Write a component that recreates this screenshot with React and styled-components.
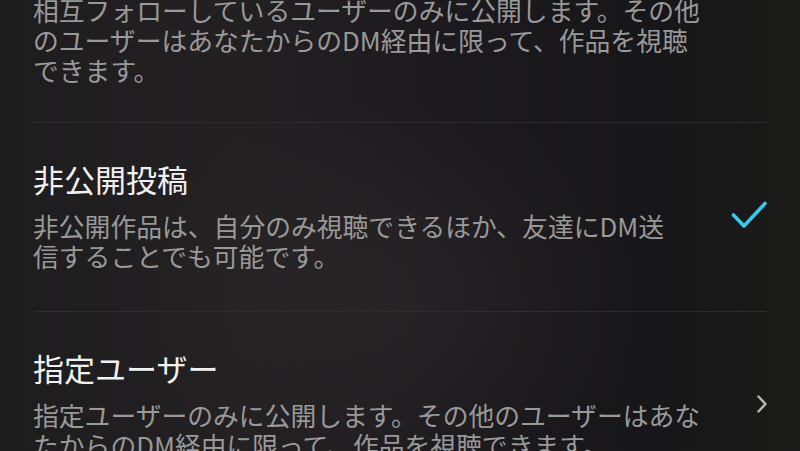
import styled, { createGlobalStyle } from 'styled-components'

const GlobalStyle = createGlobalStyle`
  html, body {
    margin: 0;
    padding: 0;
    background: #1c1a1d;
  }
  body {
    font-family: 'Noto Sans CJK JP', 'Noto Sans', sans-serif;
  }
`

const options = [
  {
    id: 'mutual',
    lines: [
      '相互フォローしているユーザーのみに公開します。その他',
      'のユーザーはあなたからのDM経由に限って、作品を視聴',
      'できます。',
    ],
  },
  {
    id: 'private',
    title: '非公開投稿',
    lines: [
      '非公開作品は、自分のみ視聴できるほか、友達にDM送',
      '信することでも可能です。',
    ],
    trail: 'check',
  },
  {
    id: 'users',
    title: '指定ユーザー',
    lines: [
      '指定ユーザーのみに公開します。その他のユーザーはあな',
      'たからのDM経由に限って、作品を視聴できます。',
    ],
    trail: 'chevron',
  },
]

const CheckIcon = () => (
  <svg width='36' height='28' viewBox='0 0 36 28' fill='none'>
    <path
      d='M2.5 14 L13 25 L34 2.5'
      stroke='#3cc7ea'
      strokeWidth='3.6'
      strokeLinecap='round'
      strokeLinejoin='round'
    />
  </svg>
)

const ChevronIcon = () => (
  <svg width='10' height='18' viewBox='0 0 10 18' fill='none'>
    <path
      d='M1.5 1.5 L8.5 9 L1.5 16.5'
      stroke='#b9b9b9'
      strokeWidth='2.4'
      strokeLinecap='round'
      strokeLinejoin='round'
    />
  </svg>
)

const App = () => {
  return (
    <>
      <GlobalStyle />
      <Screen>
        <List>
          {options.map((opt) => (
            <Row key={opt.id} $clipped={!opt.title}>
              <Body>
                {opt.title && <Title>{opt.title}</Title>}
                <Desc>
                  {opt.lines.map((line) => (
                    <Line key={line}>{line}</Line>
                  ))}
                </Desc>
              </Body>
              <Trail>
                {opt.trail === 'check' && <CheckIcon />}
                {opt.trail === 'chevron' && <ChevronIcon />}
              </Trail>
            </Row>
          ))}
        </List>
      </Screen>
    </>
  )
}

export default App

const Screen = styled.div`
  width: 800px;
  height: 451px;
  overflow: hidden;
  background:
    radial-gradient(ellipse 260px 200px at 380px 300px, rgba(60, 52, 52, 0.35), transparent),
    linear-gradient(90deg, #1e1d1e 0%, #232022 30%, #1c1a1e 55%, #171618 80%, #1a1a19 100%);
`

const List = styled.div`
  margin: -5px 33px 0;
`

const Row = styled.div`
  display: flex;
  align-items: center;
  padding: ${(p) => (p.$clipped ? '0 0 37px' : '36px 0 40px')};
  border-bottom: 1px solid #2d2b2d;
`

const Body = styled.div`
  flex: 1;
  display: flex;
  flex-direction: column;
  gap: 12px;
`

const Title = styled.div`
  font-size: 31px;
  line-height: 40px;
  color: #f1f1f1;
`

const Desc = styled.div`
  font-size: 25.8px;
  line-height: 30px;
  color: #999999;
`

const Line = styled.span`
  display: block;
  white-space: nowrap;
`

const Trail = styled.div`
  width: 60px;
  flex-shrink: 0;
  display: flex;
  justify-content: flex-end;
  align-items: center;
`
